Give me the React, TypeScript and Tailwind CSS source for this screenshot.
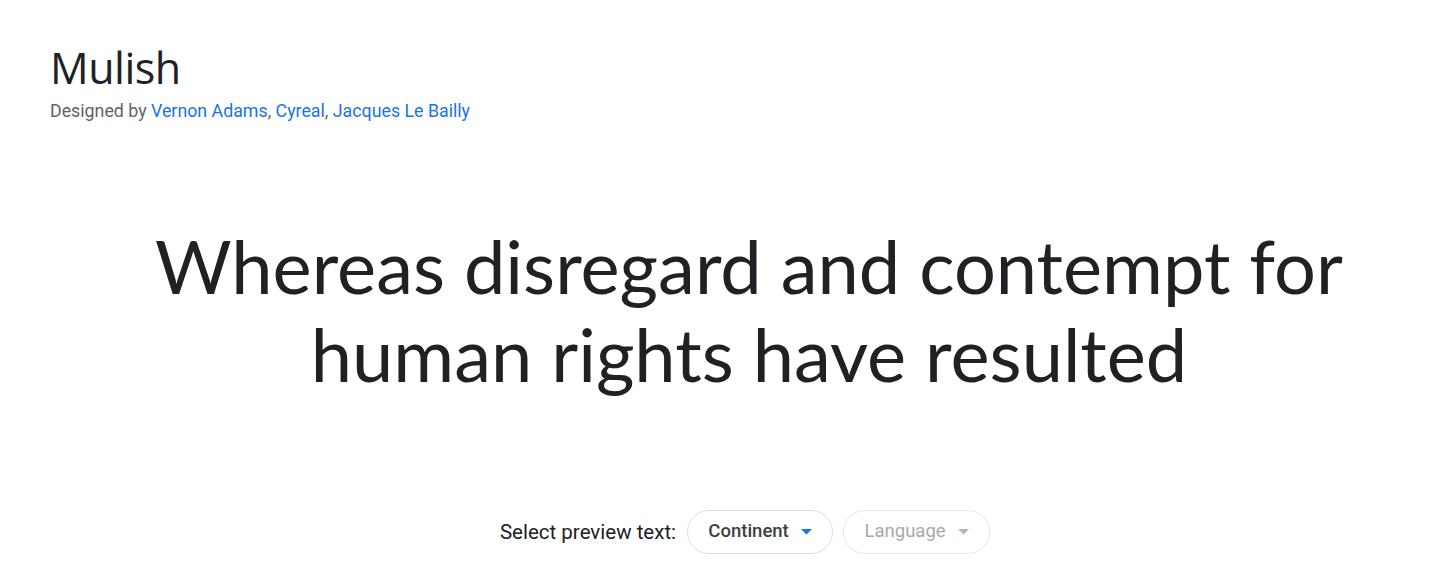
import { useState } from 'react';

function Caret({ color }: { color: string }) {
  return (
    <svg width="11" height="6" viewBox="0 0 11 6" className="ml-[12px]">
      <path d="M0 0 L11 0 L5.5 5.5 Z" fill={color} />
    </svg>
  );
}

export default function App() {
  const [continent] = useState('Continent');

  return (
    <div className="min-h-screen bg-white text-[#202124]" style={{ fontFamily: '"Open Sans", Roboto, sans-serif' }}>
      <div className="pl-[50px] pt-[40px]">
        {/* Header */}
        <h1 className="text-[43px] leading-[56px] font-normal tracking-[-0.5px]">Mulish</h1>
        <p className="mt-[3px] text-[17.8px] leading-[24px] text-[#5f6368]" style={{ fontFamily: 'Roboto, sans-serif' }}>
          Designed by <a className="text-[#1a73e8]">Vernon Adams</a>, <a className="text-[#1a73e8]">Cyreal</a>,{' '}
          <a className="text-[#1a73e8]">Jacques Le Bailly</a>
        </p>

        {/* Preview */}
        <div className="mt-[99px] flex justify-center">
          <p
            className="text-center text-[74px] leading-[88px] font-normal text-[#202124]"
            style={{ fontFamily: 'Lato, sans-serif' }}
          >
            Whereas disregard and contempt for
            <br />
            human rights have resulted
          </p>
        </div>

        {/* Controls */}
        <div className="mt-[112px] flex items-center justify-center gap-[10px] pr-[8px]" style={{ fontFamily: 'Roboto, sans-serif' }}>
          <span className="mr-[1px] text-[20.5px] text-[#202124]">Select preview text:</span>
          <button className="flex h-[44px] w-[146px] items-center justify-center rounded-full border border-[#dadce0] text-[18.5px] font-medium text-[#3c4043]">
            {continent}
            <Caret color="#1a73e8" />
          </button>
          <button disabled className="flex h-[44px] w-[147px] items-center justify-center rounded-full border border-[#e3e5e8] text-[18.5px] text-[#a6a9ad]">
            Language
            <Caret color="#b3b6ba" />
          </button>
        </div>
      </div>
    </div>
  );
}
